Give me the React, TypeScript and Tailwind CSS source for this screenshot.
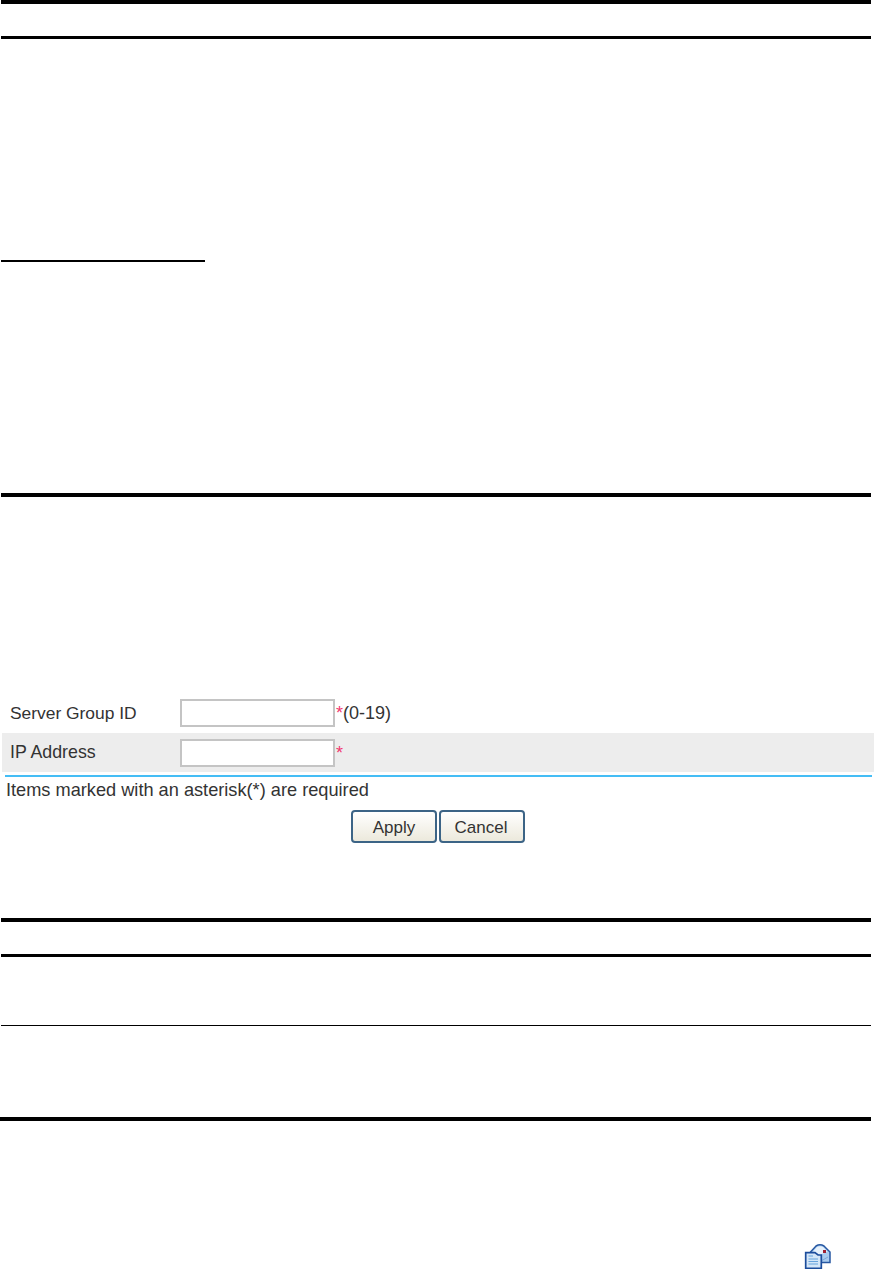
import React from 'react';

function Rule({ className }: { className: string }) {
  return <div className={`bg-black ${className}`} />;
}

function Field({ hint }: { hint?: string }) {
  return (
    <div className="flex items-center">
      <input type="text" className="w-[155px] h-[28px] bg-white border-2 border-[#c4c4c4] outline-none" />
      <span className="ml-[1px] text-[18px] text-[#f0386e]">*</span>
      {hint && <span className="text-[18px] text-[#333]">{hint}</span>}
    </div>
  );
}

function PushIcon() {
  return (
    <svg width="28" height="26" viewBox="0 0 28 26" className="ml-[804px]">
      {/* envelope */}
      <path d="M6.5 9 L12 3 Q16 0.5 20 3 L26 9 V19.5 H6.5 Z" fill="#a9cbee" stroke="#2858a2" strokeWidth="1.5" />
      <path d="M9 8.5 L13 4 Q16 2.5 19 4 L23.5 8.5 L16 12 Z" fill="#e6f1fc" />
      <path d="M17 18 L24 14" fill="none" stroke="#7fa8da" strokeWidth="1" />
      <rect x="19" y="7" width="3" height="3" fill="#a01f30" />
      {/* document */}
      <path d="M1.7 9.7 H11 L14 12 H17.3 V25.3 H1.7 Z" fill="#d4e6f8" stroke="#1c4d9c" strokeWidth="1.7" />
      <path d="M4.5 13 H9 M4.5 16 H14 M4.5 18.5 H14 M4.5 21 H14" stroke="#67a3dc" strokeWidth="1.2" />
    </svg>
  );
}

export default function App() {
  return (
    <div className="w-[874px] h-[1269px] overflow-hidden bg-white font-['Liberation_Sans',Arial,sans-serif] text-[16px] leading-none">
      <Rule className="ml-[1px] w-[870px] h-[4px]" />
      <Rule className="ml-[1px] w-[870px] h-[3px] mt-[32px]" />
      <Rule className="ml-[1px] w-[204px] h-[2px] mt-[221px]" />
      <Rule className="ml-[1px] w-[870px] h-[4px] mt-[231px]" />

      {/* Form */}
      <div className="mt-[200px] text-[#333]">
        <div className="flex items-center h-[36px] ml-[2px] pl-[8px] pb-[4px]">
          <span className="w-[170px] pt-[2px] text-[17.4px]">Server Group ID</span>
          <Field hint="(0-19)" />
        </div>
        <div className="flex items-center h-[39px] ml-[2px] pl-[8px] bg-[#ededed]">
          <span className="w-[170px] text-[17.8px]">IP Address</span>
          <Field />
        </div>
        <div className="ml-[5px] mt-[3px] w-[867px] h-[2px] bg-[#45bdf5]" />
        <div className="ml-[6px] mt-[4px] text-[18.2px]">Items marked with an asterisk(*) are required</div>
        <div className="flex gap-[2px] ml-[351px] mt-[11px]">
          <button className="w-[86px] h-[33px] pt-[1px] rounded-[4px] border-2 border-[#3c6486] bg-gradient-to-b from-white to-[#ece9dc] text-[17px] text-[#333]">Apply</button>
          <button className="w-[86px] h-[33px] pt-[1px] pr-[2px] rounded-[4px] border-2 border-[#3c6486] bg-gradient-to-b from-white to-[#ece9dc] text-[17px] text-[#333]">Cancel</button>
        </div>
      </div>

      <Rule className="ml-[1px] w-[870px] h-[4px] mt-[75px]" />
      <Rule className="ml-[1px] w-[870px] h-[3px] mt-[32px]" />
      <Rule className="ml-[1px] w-[870px] h-[1px] mt-[68px]" />
      <Rule className="w-[871px] h-[4px] mt-[91px]" />

      <div className="mt-[122px]">
        <PushIcon />
      </div>
    </div>
  );
}
